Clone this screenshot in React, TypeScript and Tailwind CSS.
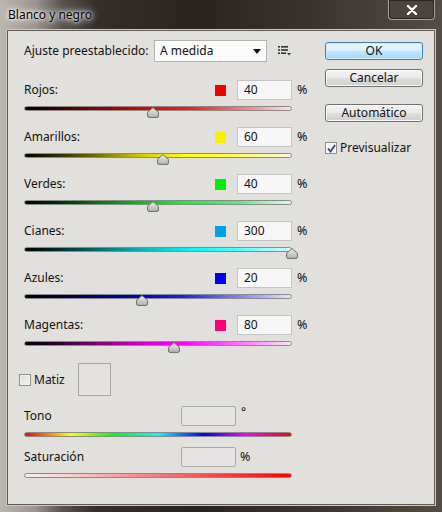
import React from 'react';

type Channel = { name: string; value: number; swatch: string; track: string };

const channels: Channel[] = [
  {
    name: 'Rojos:',
    value: 40,
    swatch: 'bg-[#f00000]',
    track: 'bg-[linear-gradient(90deg,#000_0%,#3a0000_12%,#900000_28%,#e00000_45%,#ff1a1a_62%,#ff7a7a_82%,#f8e4e4_100%)]',
  },
  {
    name: 'Amarillos:',
    value: 60,
    swatch: 'bg-[#f6f000]',
    track: 'bg-[linear-gradient(90deg,#000_0%,#2e2c00_12%,#7a7400_28%,#d8d200_45%,#ffff00_60%,#fffa60_80%,#fbf8e0_100%)]',
  },
  {
    name: 'Verdes:',
    value: 40,
    swatch: 'bg-[#00ee00]',
    track: 'bg-[linear-gradient(90deg,#000_0%,#002c00_12%,#007a10_28%,#00cc10_45%,#00ff20_60%,#50f080_80%,#e0f8e8_100%)]',
  },
  {
    name: 'Cianes:',
    value: 300,
    swatch: 'bg-[#00a0e4]',
    track: 'bg-[linear-gradient(90deg,#000_0%,#002a2a_12%,#007070_28%,#00c8c8_48%,#00f4f4_62%,#40ffff_78%,#d8fafa_100%)]',
  },
  {
    name: 'Azules:',
    value: 20,
    swatch: 'bg-[#0000f0]',
    track: 'bg-[linear-gradient(90deg,#000_0%,#00002a_12%,#000080_28%,#0000d8_45%,#2020ff_60%,#8080ff_80%,#e4e4fa_100%)]',
  },
  {
    name: 'Magentas:',
    value: 80,
    swatch: 'bg-[#f8007a]',
    track: 'bg-[linear-gradient(90deg,#000_0%,#2a0028_12%,#800078_28%,#d800d0_45%,#ff00ff_60%,#ff70ff_80%,#fae4fa_100%)]',
  },
];

const Thumb: React.FC<{ value: number }> = ({ value }) => (
  <svg
    width="12"
    height="11"
    viewBox="0 0 12 11"
    className="absolute top-0"
    style={{ left: `${((value + 200) / 500) * 268 - 7}px` }}
  >
    <defs>
      <linearGradient id="thumbGrad" x1="0" y1="0" x2="0" y2="1">
        <stop offset="0" stopColor="#ececec" />
        <stop offset="1" stopColor="#b2b2b2" />
      </linearGradient>
    </defs>
    <path
      d="M6 0.6 L11.4 5.2 V9 Q11.4 10.4 10 10.4 H2 Q0.6 10.4 0.6 9 V5.2 Z"
      fill="url(#thumbGrad)"
      stroke="#6c6c6c"
      strokeWidth="1"
    />
  </svg>
);

const Button: React.FC<{ label: string; primary?: boolean; className?: string }> = ({ label, primary, className }) => (
  <div
    className={`h-[18px] w-[98px] flex items-center justify-center rounded-[3px] border leading-none ${
      primary
        ? 'border-[#3c7fb1] bg-[linear-gradient(180deg,#eaf6fd_0%,#d9f0fc_48%,#bee6fd_52%,#a7d9f5_100%)] shadow-[inset_0_0_0_1px_#cdeefd]'
        : 'border-[#707070] bg-[linear-gradient(180deg,#f2f2f2_0%,#ebebeb_48%,#dddddd_52%,#cfcfcf_100%)] shadow-[inset_0_0_0_1px_#fbfbfb]'
    } ${className ?? ''}`}
  >
    {label}
  </div>
);

const App: React.FC = () => {
  return (
    <div className="w-[442px] h-[512px] flex flex-col bg-[linear-gradient(90deg,#bcb6b0_0%,#9c958f_8%,#5b534d_14%,#342d2a_22%,#2a2421_45%,#3a322e_70%,#554c45_100%)] font-['Noto_Sans',sans-serif] text-[12px] text-[#111]">
      {/* Title bar */}
      <div className="h-[30px] shrink-0 flex">
        <div className="flex-1 flex items-center pl-[8px] text-[12px] text-black [text-shadow:0_0_6px_#fff,0_0_10px_#fff,0_0_3px_#fff]">
          Blanco y negro
        </div>
        <div className="mr-[7px] w-[47px] h-[20px] flex items-center justify-center rounded-b-[4px] border border-t-0 border-[#aaa49e] bg-[#4a423d]/60 shadow-[inset_0_0_0_1px_#2a2421]">
          <svg width="12" height="10" viewBox="0 0 12 10">
            <path d="M2 1 L10 9 M10 1 L2 9" stroke="#ffffff" strokeWidth="2.4" strokeLinecap="round" />
          </svg>
        </div>
      </div>

      {/* Client area */}
      <div className="flex-1 mx-[7px] mb-[7px] border border-[#5f5a56] bg-[#e2e0dd] flex shadow-[0_0_0_1px_#cfc9c3]">
        {/* Left column */}
        <div className="ml-[16px] pt-[9px] w-[285px] flex flex-col">
          <div className="h-[22px] flex items-center">
            <div className="w-[130px]">Ajuste preestablecido:</div>
            <div className="w-[113px] h-[22px] flex items-center justify-between pl-[5px] pr-[5px] bg-[#fbfbfb] border border-[#b3b3b3]">
              <span>A medida</span>
              <svg width="8" height="5" viewBox="0 0 8 5">
                <path d="M0 0 H8 L4 5 Z" fill="#111" />
              </svg>
            </div>
            <svg width="13" height="10" viewBox="0 0 13 10" className="ml-[11px]">
              <rect x="0" y="0" width="2" height="1.6" fill="#333" />
              <rect x="3" y="0" width="7" height="1.6" fill="#333" />
              <rect x="0" y="3.2" width="2" height="1.6" fill="#333" />
              <rect x="3" y="3.2" width="7" height="1.6" fill="#333" />
              <rect x="0" y="6.4" width="2" height="1.6" fill="#333" />
              <rect x="3" y="6.4" width="5" height="1.6" fill="#333" />
              <path d="M9 7 H13 L11 9.5 Z" fill="#333" />
            </svg>
          </div>

          <div className="mt-[18px] flex flex-col">
            {channels.map((c) => (
              <div key={c.name} className="h-[47px] flex flex-col">
                <div className="h-[20px] flex items-center">
                  <div className="flex-1">{c.name}</div>
                  <div className={`w-[11px] h-[11px] ${c.swatch}`} />
                  <div className="ml-[11px] w-[55px] h-[20px] flex items-center pl-[6px] bg-[#f7f7f7] border border-[#c4c4c4] text-[12px]">
                    {c.value}
                  </div>
                  <div className="ml-[5px] w-[12px] text-[12.5px]">%</div>
                </div>
                <div className={`relative mt-[6px] w-[268px] h-[5px] rounded-full border border-[#8a8a8a] ${c.track}`}>
                  <Thumb value={c.value} />
                </div>
              </div>
            ))}
          </div>

          {/* Matiz */}
          <div className="mt-[1px] h-[33px] flex items-center">
            <div className="ml-[-5px] w-[59px] flex items-center">
              <div className="w-[12px] h-[12px] border border-[#8e8f8f] bg-[linear-gradient(135deg,#dcdcdc_0%,#f4f4f4_100%)] shadow-[inset_0_0_0_1px_#f2f2f2]" />
              <span className="ml-[3px]">Matiz</span>
            </div>
            <div className="w-[33px] h-[33px] border border-[#a8a6a3] bg-[#e4e2df]" />
          </div>

          {/* Tono */}
          <div className="mt-[10px] h-[20px] flex items-center">
            <div className="w-[157px]">Tono</div>
            <div className="w-[55px] h-[20px] bg-[#e6e4e1] border border-[#a9a9a9] rounded-[2px]" />
            <div className="ml-[5px] -mt-[8px]">°</div>
          </div>
          <div className="mt-[6px] w-[268px] h-[5px] rounded-full border border-[#8a8a8a] bg-[linear-gradient(90deg,#ff0000_0%,#ffff00_17%,#00ff00_33%,#00ffff_50%,#0000ff_67%,#ff00ff_83%,#ff0000_100%)]" />

          {/* Saturación */}
          <div className="mt-[10px] h-[20px] flex items-center">
            <div className="w-[157px]">Saturación</div>
            <div className="w-[55px] h-[20px] bg-[#e6e4e1] border border-[#a9a9a9] rounded-[2px]" />
            <div className="ml-[4px] text-[12.5px]">%</div>
          </div>
          <div className="mt-[6px] w-[268px] h-[5px] rounded-full border border-[#8a8a8a] bg-[linear-gradient(90deg,#f4f0f0_0%,#f8c8c8_20%,#f27070_55%,#ff0000_100%)]" />
        </div>

        {/* Right column */}
        <div className="ml-[16px] pt-[11px] w-[98px] flex flex-col">
          <Button label="OK" primary />
          <Button label="Cancelar" className="mt-[9px]" />
          <Button label="Automático" className="mt-[17px]" />
          <div className="mt-[20px] h-[12px] flex items-center">
            <div className="w-[12px] h-[12px] shrink-0 flex items-center justify-center border border-[#8e8f8f] bg-[#f6f6f6]">
              <svg width="9" height="9" viewBox="0 0 9 9">
                <path d="M1 4.5 L3.5 7.5 L8 1" stroke="#31418f" strokeWidth="1.8" fill="none" />
              </svg>
            </div>
            <span className="ml-[3px] whitespace-nowrap">Previsualizar</span>
          </div>
        </div>
      </div>
    </div>
  );
};

export default App;
